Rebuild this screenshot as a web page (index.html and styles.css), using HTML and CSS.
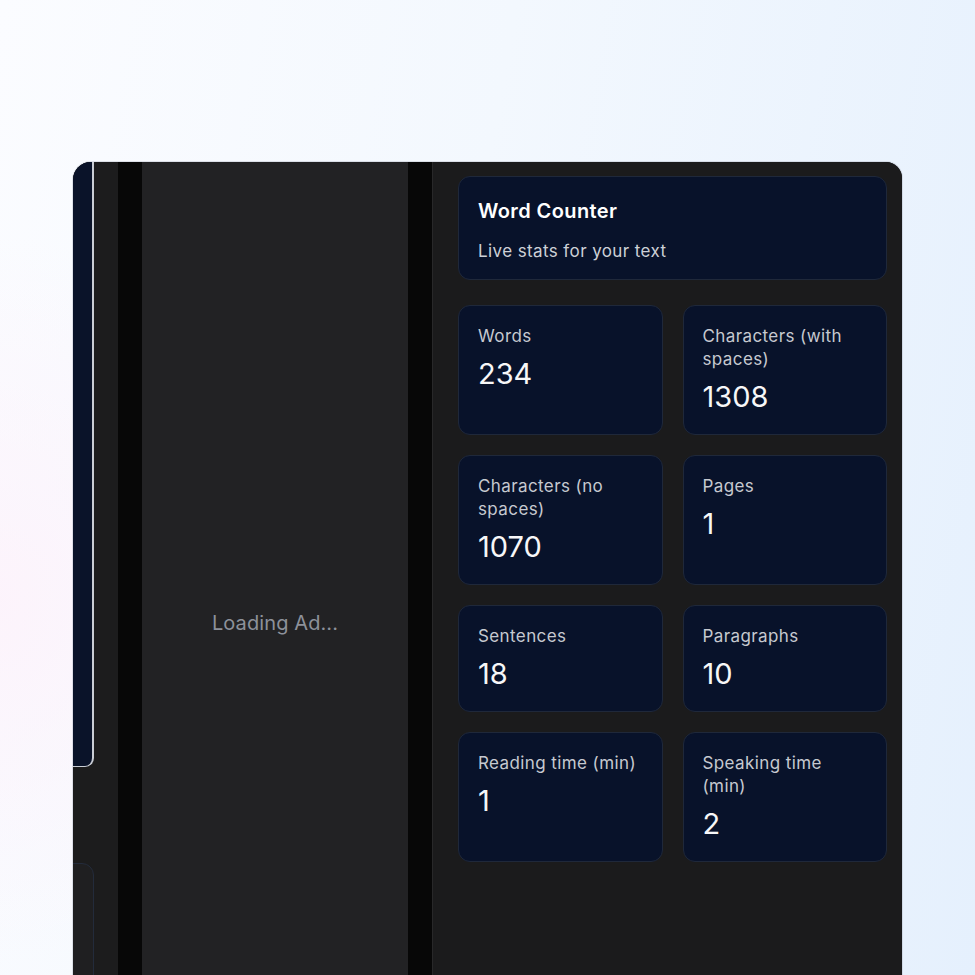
FILE: index.html
```html
<!DOCTYPE html>
<html lang="en">
<head>
<meta charset="utf-8">
<title>Word Counter</title>
<link rel="stylesheet" href="styles.css">
</head>
<body>
<div class="stage">
  <div class="window">
    <div class="side">
      <div class="side-card"></div>
      <div class="side-card2"></div>
    </div>
    <div class="gutter"></div>
    <div class="ad">
      <span class="ad-text">Loading Ad...</span>
    </div>
    <div class="gutter"></div>
    <div class="panel">
      <div class="head-card">
        <div class="title">Word Counter</div>
        <div class="subtitle">Live stats for your text</div>
      </div>
      <div class="stats">
        <div class="stat"><div class="label">Words</div><div class="value">234</div></div>
        <div class="stat"><div class="label">Characters (with spaces)</div><div class="value">1308</div></div>
        <div class="stat"><div class="label">Characters (no spaces)</div><div class="value">1070</div></div>
        <div class="stat"><div class="label">Pages</div><div class="value">1</div></div>
        <div class="stat"><div class="label">Sentences</div><div class="value">18</div></div>
        <div class="stat"><div class="label">Paragraphs</div><div class="value">10</div></div>
        <div class="stat"><div class="label">Reading time (min)</div><div class="value">1</div></div>
        <div class="stat"><div class="label">Speaking time (min)</div><div class="value">2</div></div>
      </div>
    </div>
  </div>
</div>
</body>
</html>
```
FILE: styles.css
```css
* { box-sizing: border-box; }
html, body { margin: 0; padding: 0; }
body {
  width: 975px;
  height: 975px;
  overflow: hidden;
  font-family: Inter, "Noto Sans", "Liberation Sans", sans-serif;
  background:
    radial-gradient(ellipse 420px 520px at 0px 600px, rgba(253, 242, 251, 0.85), rgba(253, 242, 251, 0) 70%),
    linear-gradient(100deg, #fbfcff 0%, #f3f8fe 45%, #e5f0fd 100%);
}
.stage {
  padding: 162px 0 0 73px;
}
.window {
  width: 829px;
  height: 840px;
  display: flex;
  background: #1b1b1c;
  border-radius: 18px 16px 0 0;
  overflow: hidden;
  box-shadow: 0 0 0 1px rgba(170, 176, 188, 0.35);
}
.side {
  width: 45px;
  flex: none;
  background: #1c1c1d;
  display: flex;
  flex-direction: column;
}
.side-card {
  height: 605px;
  width: 40px;
  margin-left: -19px;
  background: #0a1329;
  border-right: 2px solid #c9cdd5;
  border-bottom: 1px solid #c9cdd5;
  border-radius: 0 0 9px 0;
  flex: none;
}
.side-card2 {
  margin-top: 96px;
  width: 40px;
  margin-left: -19px;
  flex: 1;
  background: #1f1f21;
  border: 1px solid #232b3b;
  border-radius: 0 12px 0 0;
}
.gutter {
  width: 24px;
  flex: none;
  background: #070707;
}
.ad {
  width: 266px;
  flex: none;
  background: #222224;
  display: flex;
  align-items: center;
  justify-content: center;
  padding-top: 82px;
}
.ad-text {
  color: #8d919a;
  font-size: 20px;
  letter-spacing: 0.1px;
}
.panel {
  flex: 1;
  background: #1b1b1c;
  border-left: 1px solid #282829;
  padding: 14px 15px 0 25px;
}
.head-card {
  background: #08122a;
  border: 1px solid #1f283a;
  border-radius: 12px;
  padding: 19px 19px 16px;
}
.title {
  color: #ffffff;
  font-size: 20px;
  font-weight: 600;
  letter-spacing: 0.4px;
  line-height: 30px;
  margin-bottom: 14px;
}
.subtitle {
  color: #cdd0d7;
  font-size: 17px;
  letter-spacing: 0.4px;
  line-height: 23px;
}
.stats {
  margin-top: 25px;
  display: grid;
  grid-template-columns: 1fr 1fr;
  gap: 20px;
}
.stat {
  background: #08122a;
  border: 1px solid #1f283a;
  border-radius: 12px;
  padding: 19px 19px;
}
.label {
  color: #c6c9d0;
  font-size: 17px;
  letter-spacing: 0.4px;
  line-height: 23px;
}
.value {
  color: #f7f7f8;
  font-size: 29px;
  line-height: 36px;
  margin-top: 8px;
}
```
